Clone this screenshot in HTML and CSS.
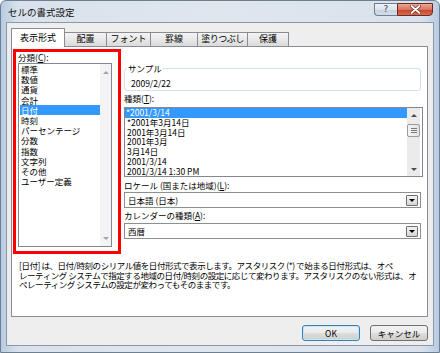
FILE: index.html
```html
<!DOCTYPE html>
<html>
<head>
    <title>セルの書式設定</title>
    <meta charset="UTF-8">
    <link rel="stylesheet" href="styles.css">
</head>
<body>
    <div class="window">
        <div class="titlebar">
            <span class="title">セルの書式設定</span>
            <div class="caption-btns">
                <span class="cap-btn help">?</span>
                <span class="cap-btn close">
                    <svg width="11" height="9" viewBox="0 0 11 9">
                        <path d="M1.5 1 L9.5 8 M9.5 1 L1.5 8" stroke="#6b2a20" stroke-width="3.2" stroke-linecap="round"/>
                        <path d="M1.5 1 L9.5 8 M9.5 1 L1.5 8" stroke="#fff" stroke-width="1.8" stroke-linecap="round"/>
                    </svg>
                </span>
            </div>
        </div>
        <div class="client">
            <div class="tabs">
                <div class="tab active">表示形式</div>
                <div class="tab t-haichi">配置</div>
                <div class="tab t-font">フォント</div>
                <div class="tab t-keisen">罫線</div>
                <div class="tab t-nuri">塗りつぶし</div>
                <div class="tab t-hogo">保護</div>
            </div>
            <div class="panel">
                <div class="top">
                    <div class="category-box">
                        <div class="label">分類(<u>C</u>):</div>
                        <div class="listbox category-list">
                            <ul class="items">
                                <li>標準</li>
                                <li>数値</li>
                                <li>通貨</li>
                                <li>会計</li>
                                <li class="sel">日付</li>
                                <li>時刻</li>
                                <li>パーセンテージ</li>
                                <li>分数</li>
                                <li>指数</li>
                                <li>文字列</li>
                                <li>その他</li>
                                <li>ユーザー定義</li>
                            </ul>
                            <div class="vscroll disabled">
                                <div class="arrow-btn"><span class="arr up"></span></div>
                                <div class="arrow-btn"><span class="arr down"></span></div>
                            </div>
                        </div>
                    </div>
                    <div class="details">
                        <fieldset class="sample">
                            <legend>サンプル</legend>
                            <div class="sample-value">2009/2/22</div>
                        </fieldset>
                        <div class="label l-type">種類(<u>T</u>):</div>
                        <div class="listbox type-list">
                            <ul class="items">
                                <li class="sel">*2001/3/14</li>
                                <li>*2001年3月14日</li>
                                <li>2001年3月14日</li>
                                <li>2001年3月</li>
                                <li>3月14日</li>
                                <li>2001/3/14</li>
                                <li>2001/3/14 1:30 PM</li>
                            </ul>
                            <div class="vscroll">
                                <div class="arrow-btn"><span class="arr up"></span></div>
                                <div class="track"><div class="thumb"><i></i><i></i><i></i></div></div>
                                <div class="arrow-btn"><span class="arr down"></span></div>
                            </div>
                        </div>
                        <div class="label l-locale">ロケール (国または地域)(<u>L</u>):</div>
                        <div class="combo"><span>日本語 (日本)</span><span class="drop"><span class="arr down"></span></span></div>
                        <div class="label l-cal">カレンダーの種類(<u>A</u>):</div>
                        <div class="combo"><span>西暦</span><span class="drop"><span class="arr down"></span></span></div>
                    </div>
                </div>
                <p class="desc">[日付] は、日付/時刻のシリアル値を日付形式で表示します。アスタリスク (*) で始まる日付形式は、オペ<br>レーティング システムで指定する地域の日付/時刻の設定に応じて変わります。アスタリスクのない形式は、オ<br>ペレーティング システムの設定が変わってもそのままです。</p>
            </div>
            <div class="buttons">
                <button class="btn default">OK</button>
                <button class="btn">キャンセル</button>
            </div>
        </div>
    </div>
</body>
</html>
```

FILE: styles.css
```css
* {
    box-sizing: border-box;
}
body {
    margin: 0;
    background: #ffffff;
    font-family: "Noto Sans CJK JP", sans-serif;
    font-size: 8.5px;
    color: #000;
}
.window {
    width: 440px;
    height: 353px;
    border: 1px solid #6e7f91;
    border-radius: 6px 6px 0 0;
    background: linear-gradient(to right, #b7cce2, #d9e2ec 4%, #dfe6ee 50%, #d9e2ec 96%, #b7cce2);
    padding: 0 5px 6px 5px;
    display: flex;
    flex-direction: column;
}
.titlebar {
    height: 21px;
    display: flex;
    align-items: flex-start;
}
.title {
    margin: 6px 0 0 2px;
    font-size: 9.5px;
    line-height: 11px;
    color: #111;
}
.caption-btns {
    margin: 2px 1px 0 auto;
    display: flex;
}
.cap-btn {
    height: 13px;
    display: flex;
    align-items: center;
    justify-content: center;
    border: 1px solid #6d7e91;
}
.help {
    width: 23px;
    border-right: none;
    border-radius: 0 0 0 4px;
    background: linear-gradient(#eef2f6, #dbe3ec 50%, #c6d2df 51%, #d3dde8);
    color: #3b4a5a;
    font-family: "DejaVu Sans", sans-serif;
    font-size: 9px;
    line-height: 11px;
}
.close {
    width: 36px;
    border-color: #6b2a20;
    border-radius: 0 0 4px 0;
    background: linear-gradient(#eaa797, #d9745f 50%, #c7432c 51%, #d86a52);
}
.client {
    flex: 1;
    border: 1px solid #8a99a8;
    background: #eeeeee;
    padding: 5px 5px 4px 4px;
    display: flex;
    flex-direction: column;
}
.tabs {
    display: flex;
    align-items: flex-end;
    height: 19px;
    margin-bottom: -1px;
    position: relative;
    z-index: 1;
}
.tab {
    height: 14px;
    margin-left: -1px;
    margin-bottom: 1px;
    border: 1px solid #898c95;
    border-bottom: none;
    background: linear-gradient(#f4f4f4, #e8e8e8 50%, #dadada);
    text-align: center;
    font-size: 9px;
    line-height: 12px;
    white-space: nowrap;
}
.tab.active {
    margin-left: 0;
    margin-bottom: 0;
    width: 54px;
    height: 19px;
    padding-top: 3px;
    background: #ffffff;
    position: relative;
    z-index: 2;
}
.t-haichi { width: 43px; }
.t-font { width: 45px; }
.t-keisen { width: 48px; }
.t-nuri { width: 51px; letter-spacing: -0.5px; }
.t-hogo { width: 42px; }
.panel {
    height: 271px;
    border: 1px solid #898c95;
    background: #ffffff;
    padding: 2px 4px 0 1px;
}
.top {
    display: flex;
}
.label {
    line-height: 10px;
    white-space: nowrap;
}
.category-box {
    width: 108px;
    height: 205px;
    border: 3px solid #ff0000;
    padding: 0 6px 4px 2px;
    display: flex;
    flex-direction: column;
}
.listbox {
    border: 1px solid #828790;
    background: #ffffff;
    display: flex;
}
.category-list {
    margin-top: 1px;
    height: 184px;
}
.items {
    flex: 1;
    list-style: none;
    margin: 0;
    padding: 0;
    overflow: hidden;
}
.items li {
    height: 10.2px;
    line-height: 10.2px;
    padding-left: 2px;
    white-space: nowrap;
}
.items li.sel {
    background: #3399ff;
    color: #ffffff;
    margin-left: 1px;
    padding-left: 1px;
}
.vscroll {
    width: 11px;
    background: #f3f3f3;
    display: flex;
    flex-direction: column;
    justify-content: space-between;
}
.arrow-btn {
    height: 16px;
    display: flex;
    align-items: center;
    justify-content: center;
}
.arr {
    width: 0;
    height: 0;
    border-left: 3px solid transparent;
    border-right: 3px solid transparent;
}
.arr.up {
    border-bottom: 3px solid #4a4a4a;
}
.arr.down {
    border-top: 3px solid #4a4a4a;
}
.vscroll.disabled .arr.up {
    border-bottom-color: #a3a3a3;
}
.vscroll.disabled .arr.down {
    border-top-color: #a3a3a3;
}
.details {
    margin-left: 3px;
    width: 299px;
    padding-top: 14px;
    display: flex;
    flex-direction: column;
}
.sample {
    width: 297px;
    height: 28px;
    margin: 0;
    min-width: 0;
    padding: 5px 6px 2px 6px;
    border: 1px solid #d5dfe5;
    border-radius: 3px;
}
.sample legend {
    padding: 0 1px;
    margin-left: -4px;
    line-height: 10px;
}
.sample-value {
    line-height: 10px;
}
.l-type {
    margin: 2px 0 4px;
}
.type-list {
    width: 299px;
    height: 70px;
}
.type-list .items li {
    height: 9.8px;
    line-height: 9.8px;
}
.type-list .items li.sel {
    margin-left: 0;
}
.type-list .vscroll {
    width: 13px;
    margin-right: 2px;
    background: #ebebeb;
}
.type-list .arrow-btn {
    height: 14px;
}
.track {
    flex: 1;
    padding-top: 2px;
}
.thumb {
    height: 13px;
    border: 1px solid #9a9a9a;
    border-radius: 2px;
    background: linear-gradient(to right, #f4f4f4, #e2e2e2);
    display: flex;
    flex-direction: column;
    align-items: center;
    justify-content: center;
    gap: 1px;
}
.thumb i {
    display: block;
    width: 6px;
    height: 1px;
    background: #7a7a7a;
}
.l-locale {
    margin: 3px 0 2px;
}
.l-cal {
    margin: 2px 0 3px;
}
.combo {
    width: 297px;
    height: 16px;
    border: 1px solid #8e8f8f;
    background: #ffffff;
    padding-left: 3px;
    line-height: 14px;
    display: flex;
    justify-content: space-between;
    align-items: center;
}
.drop {
    width: 12px;
    height: 11px;
    margin-right: 2px;
    border: 1px solid #707070;
    border-radius: 1px;
    background: linear-gradient(#f2f2f2, #e6e6e6 50%, #d4d4d4);
    display: flex;
    align-items: center;
    justify-content: center;
}
.drop .arr.down {
    border-top-color: #000;
}
.desc {
    margin: 7px 0 0 6px;
    line-height: 9.5px;
    letter-spacing: -0.45px;
    white-space: nowrap;
}
.buttons {
    display: flex;
    justify-content: flex-end;
    gap: 10px;
    margin-top: 8px;
}
.btn {
    width: 58px;
    height: 16px;
    padding: 0;
    border: 1px solid #707070;
    border-radius: 3px;
    background: linear-gradient(#f2f2f2, #ebebeb 50%, #dddddd 51%, #cfcfcf);
    font-family: "Noto Sans CJK JP", sans-serif;
    font-size: 8.5px;
    line-height: 14px;
    color: #000;
}
.btn.default {
    border-color: #3c7fb1;
    box-shadow: inset 0 0 0 1px #bfe6fa;
}
```
